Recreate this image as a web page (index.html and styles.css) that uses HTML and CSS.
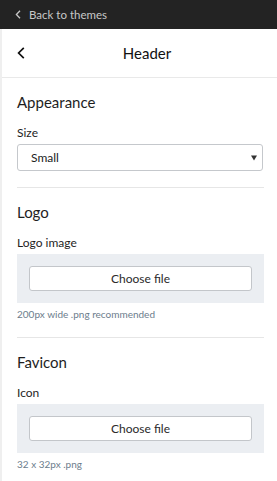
FILE: index.html
```html
<!DOCTYPE html>
<html>
<head>
<meta charset="utf-8">
<link rel="stylesheet" href="styles.css">
</head>
<body>
<div class="topbar">
  <svg class="topbar-chev" width="6" height="9" viewBox="0 0 6 9"><path d="M5 0.8 L1.4 4.5 L5 8.2" fill="none" stroke="#c8c8c8" stroke-width="1.3"/></svg>
  <span>Back to themes</span>
</div>
<div class="page">
  <div class="header">
    <div class="back">
      <svg width="8" height="12" viewBox="0 0 8 12"><path d="M6.8 0.8 L1.6 6 L6.8 11.2" fill="none" stroke="#111" stroke-width="1.7"/></svg>
    </div>
    <div class="title">Header</div>
  </div>

  <div class="section">
    <div class="heading">Appearance</div>
    <div class="label">Size</div>
    <div class="select">
      <span>Small</span>
      <svg width="6" height="6" viewBox="0 0 6 6"><path d="M0 0.5 H6 L3 5.5 Z" fill="#333"/></svg>
    </div>
  </div>

  <div class="section">
    <div class="heading">Logo</div>
    <div class="label">Logo image</div>
    <div class="dropbox"><div class="button">Choose file</div></div>
    <div class="hint">200px wide .png recommended</div>
  </div>

  <div class="section last">
    <div class="heading">Favicon</div>
    <div class="label">Icon</div>
    <div class="dropbox"><div class="button">Choose file</div></div>
    <div class="hint">32 x 32px .png</div>
  </div>
</div>
</body>
</html>
```
FILE: styles.css
```css
html, body {
  margin: 0;
  padding: 0;
  background: #fff;
}
body {
  font-family: Lato, "Liberation Sans", sans-serif;
  color: #1e1e1e;
  width: 277px;
  height: 481px;
  overflow: hidden;
}
.topbar {
  height: 29px;
  background: #232323;
  color: #c8c8c8;
  font-size: 11.5px;
  display: flex;
  align-items: center;
  padding-left: 15px;
  padding-bottom: 1px;
  box-sizing: border-box;
}
.topbar-chev {
  margin-right: 8px;
}
.page {
  border-left: 2px solid #efefef;
  min-height: 452px;
}
.header {
  height: 48px;
  border-bottom: 1px solid #e9e9e9;
  display: flex;
  align-items: center;
  padding: 0 30px 0 15px;
}
.back {
  width: 30px;
  display: flex;
  align-items: center;
}
.title {
  flex: 1;
  text-align: center;
  font-size: 15px;
  color: #111;
}
.section {
  margin: 0 13px 0 15px;
  padding: 14px 0 16px;
  border-bottom: 1px solid #e6e6e6;
}
.section.last {
  border-bottom: none;
}
.heading {
  font-size: 15px;
  line-height: 20px;
  margin-bottom: 13px;
}
.label {
  font-size: 12px;
  line-height: 16px;
  margin-bottom: 3px;
}
.select {
  height: 25px;
  border: 1px solid #c5c8cc;
  border-radius: 3px;
  margin-right: 1px;
  display: flex;
  align-items: center;
  justify-content: space-between;
  padding: 0 5px 0 13px;
  font-size: 12px;
  color: #222;
}
.dropbox {
  background: #ebeef2;
  padding: 12px 12px 12px 12px;
}
.button {
  height: 23px;
  border: 1px solid #c3c6ca;
  border-radius: 3px;
  background: #fff;
  display: flex;
  align-items: center;
  justify-content: center;
  font-size: 12px;
  color: #2a2a2a;
}
.hint {
  margin-top: 4px;
  font-size: 10px;
  line-height: 14px;
  color: #6c7d8c;
}
```
